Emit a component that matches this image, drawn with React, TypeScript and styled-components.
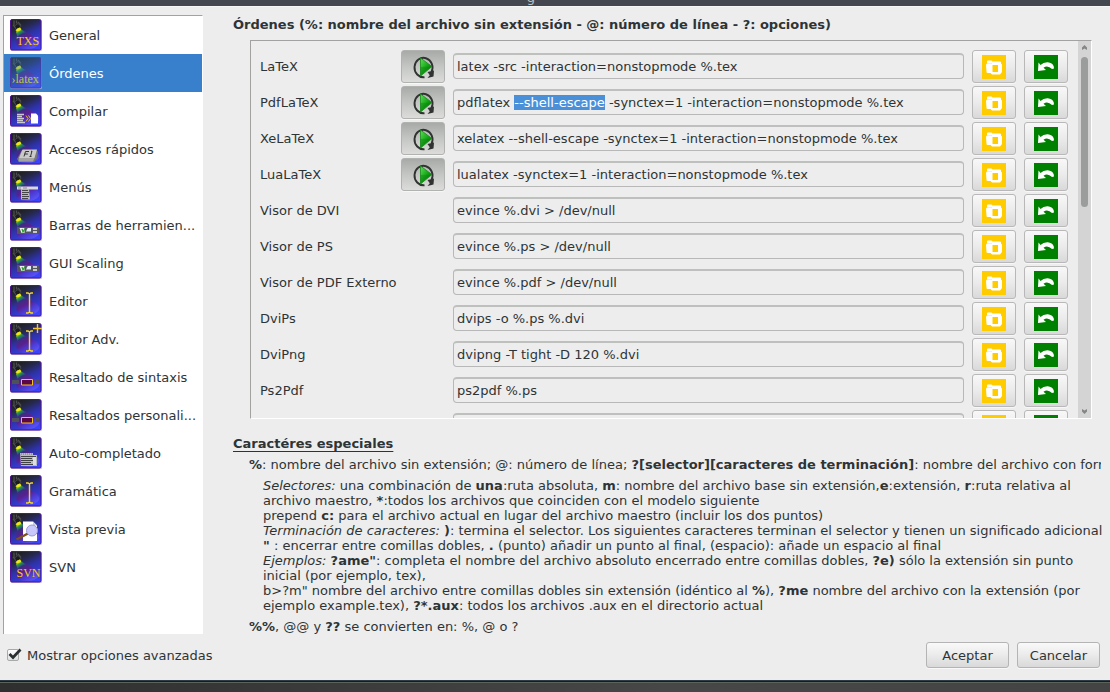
import React, { useEffect, useRef } from "react";
import styled, { createGlobalStyle } from "styled-components";

const GlobalStyle = createGlobalStyle`
  * { box-sizing: border-box; }
  body {
    margin: 0;
    background: #ededed;
    color: #2e3436;
    font-family: "DejaVu Sans", sans-serif;
    font-size: 13px;
    line-height: 15px;
  }
  button, input { font: inherit; color: inherit; margin: 0; }
`;

const Window = styled.div`
  display: flex;
  flex-direction: column;
  min-height: 100vh;
`;

const TitleBar = styled.header`
  display: flex;
  justify-content: center;
  align-items: flex-end;
  height: 6px;
  padding-right: 48px;
  padding-bottom: 1px;
  overflow: hidden;
  background: #444750;
  color: #c0c2c6;
`;

const Content = styled.div`
  flex: 1;
  display: flex;
  padding: 8px 6px 0 3px;
  border-top: 1px solid #f6f6f6;
`;

const Sidebar = styled.nav`
  flex: 0 0 200px;
  background: #fff;
  border: 1px solid #fff;
  border-top-color: #a2a2a0;
  border-left-color: #a2a2a0;
  border-bottom: 0;
`;

const SideLink = styled.a<{ $active?: boolean }>`
  display: flex;
  align-items: center;
  gap: 7px;
  height: 38px;
  padding-left: 6px;
  color: ${(p) => (p.$active ? "#fff" : "#2e3436")};
  background: ${(p) => (p.$active ? "#3880cc" : "transparent")};
  text-decoration: none;
  white-space: nowrap;
`;

const Tile = styled.svg<{ $dim?: boolean }>`
  flex: none;
  opacity: ${(p) => (p.$dim ? 0.65 : 1)};
`;

const Page = styled.main`
  flex: 1;
  min-width: 0;
  padding-left: 30px;
`;

const Heading = styled.h1`
  margin: 2px 0 7px;
  font-size: 13px;
  line-height: 16px;
  font-weight: bold;
`;

const Frame = styled.section`
  display: flex;
  height: 379px;
  margin: 0 12px 0 17px;
  border: 1px solid #fff;
  border-top-color: #a2a2a0;
  border-left-color: #a2a2a0;
  overflow: hidden;
`;

const Rows = styled.div`
  flex: 1;
  min-width: 0;
  padding: 9px 10px 0 9px;
`;

const Row = styled.div`
  display: grid;
  grid-template-columns: 133px 44px 1fr 44px 44px;
  column-gap: 8px;
  align-items: center;
  height: 36px;
  padding-bottom: 3px;
  white-space: nowrap;
`;

const CommandInput = styled.input`
  && { margin-bottom: 1px; }
  grid-column: 3;
  width: 100%;
  height: 26px;
  padding: 0 3px;
  border: 1px solid #b8b8b8;
  border-top: 2px solid #bec0be;
  border-radius: 4px;
  background: #ededed;
  outline: none;
  &::selection { background: #4a90d9; color: #fff; }
`;

const ToolButton = styled.button<{ $pressed?: boolean }>`
  display: flex;
  align-items: center;
  justify-content: center;
  height: 33px;
  padding: 1px 0 0;
  border: 1px solid ${(p) => (p.$pressed ? "#b0b3b0" : "#b8b8b8")};
  border-radius: 3px;
  background: ${(p) =>
    p.$pressed
      ? "linear-gradient(#a7aaa6, #c4c6c3 50%, #dcdddb)"
      : "linear-gradient(#f8f8f8, #ebebeb 50%, #d9d9d9)"};
  box-shadow: 0 1px 0 #f7f7f7;
`;

const ScrollTrack = styled.div`
  display: flex;
  flex-direction: column;
  align-items: center;
  width: 13px;
  padding: 4px 0;
  background: #d4d4d4;
`;

const ScrollThumb = styled.div`
  width: 7px;
  height: 150px;
  margin-top: 7px;
  margin-bottom: auto;
  border-radius: 4px;
  background: #9b9d9d;
`;

const Help = styled.section`
  margin-top: 17px;
`;

const HelpTitle = styled.h2`
  margin: 0;
  font-size: 13px;
  line-height: 16px;
  text-decoration: underline;
  text-underline-offset: 3px;
`;

const HelpLine = styled.p`
  margin: 5px 3px 6px 16px;
  overflow: hidden;
  white-space: nowrap;
  &:last-child { margin-bottom: 0; }
`;

const HelpBlock = styled.p`
  margin: 0 0 6px 30px;
`;

const Footer = styled.footer`
  display: flex;
  align-items: center;
  justify-content: space-between;
  height: 46px;
  padding: 0 10px 4px 7px;
`;

const CheckLabel = styled.label`
  display: flex;
  align-items: center;
  gap: 5px;
`;

const CheckHolder = styled.span`
  position: relative;
  display: flex;
  width: 15px;
  height: 14px;
`;

const Check = styled.input`
  appearance: none;
  width: 12px;
  height: 12px;
  margin-top: 1px;
  border: 1px solid #a8aaa8;
  border-radius: 2px;
  background: linear-gradient(#fff, #e0e0e0);
  & + svg { display: none; }
  &:checked + svg { display: block; }
`;

const CheckMark = styled.svg`
  position: absolute;
  left: 0;
  top: 0;
  pointer-events: none;
`;

const Actions = styled.div`
  display: flex;
  gap: 8px;
`;

const DialogButton = styled.button`
  width: 83px;
  height: 26px;
  padding: 0;
  border: 1px solid #b4b4b4;
  border-radius: 3px;
  background: linear-gradient(#f9f9f9, #ebebeb 50%, #d9d9d9);
  box-shadow: 0 1px 0 #f8f8f8;
`;

const Desktop = styled.div`
  height: 12px;
  border-top: 1px solid #2e3a44;
  background: linear-gradient(#171c20 0 1px, #5b645b 1px 2px, transparent 2px),
    linear-gradient(90deg, #2f2f2f, #474747 60%, #444);
`;

const PaintDefs = styled.svg`
  display: block;
`;

type Kind =
  | "txs" | "latex" | "build" | "key" | "menu" | "toolbar" | "cursor"
  | "cursorPlus" | "syntax" | "complete" | "preview" | "svn";

const serif = '"Liberation Serif", serif';

const Cursor = () => (
  <path
    d="M16 8h2l1.500 1 1.500-1h2M19.500 9v18.500M16 28h2l1.500-1 1.500 1h2"
    fill="none" stroke="#f8d81c" strokeWidth="1.400"
  />
);

const Emblem = ({ kind }: { kind: Kind }) => {
  switch (kind) {
    case "txs":
      return <text x="6.500" y="26" fontFamily={serif} fontSize="12" fill="#f8c820">TXS</text>;
    case "svn":
      return <text x="6.500" y="26" fontFamily={serif} fontSize="12" fill="#f8c820">SVN</text>;
    case "latex":
      return <text x="1.500" y="26" fontFamily={serif} fontSize="12" fill="#ffe800">›latex</text>;
    case "build":
      return (
        <g>
          <path d="M7 19.500h7M7 21.500h5M7 23.500h7M7 25.500h6M7 27.500h8" stroke="#c9c9cf" strokeWidth="1.300" />
          <path d="M16 20.500l2 3-2 3M18.500 20.500l2 3-2 3" fill="none" stroke="#e3b92c" />
          <path d="M21 18.500h5l2 2v8h-7z" fill="#fff" />
        </g>
      );
    case "key":
      return (
        <g>
          <path d="M12 17h14.500l1.500 2-1 6-3 4H9l-2-3z" fill="#77777a" />
          <path d="M12.500 16.500H27L24.500 25H9z" fill="#c9c9c9" />
          <path d="M9 25h15.500L23 28.500H8.500z" fill="#a3a3a3" />
          <path d="M14 23.500l1.500-5h3.500M14.800 21h3M21 18.500l1-.500-1.500 5.500M19.500 23.500h2" fill="none" stroke="#333" />
        </g>
      );
    case "menu":
      return (
        <g>
          <path d="M7 15.500h21v3H7z" fill="#d9d9de" />
          <path d="M11 18h8l1 10.500h-9z" fill="#b9b9b9" />
          <path d="M12 19.500h6M12 21.500h7M12 23.500h6M12 25.500h7M12 27.500h6" stroke="#45454a" />
          <path d="M8 17h3M13 17h4" stroke="#888" />
        </g>
      );
    case "toolbar":
      return (
        <g>
          <path d="M7 18h22v7H7z" fill="#54565f" />
          <path d="M9.500 19h5v5h-3z" fill="#f4f4f4" />
          <path d="M12 20l1 3 2-3.500" fill="none" stroke="#2ea032" strokeWidth="1.300" />
          <path d="M17 20l1-1h3v4h-5z" fill="#e4effd" />
          <path d="M16 22.500h5" stroke="#70a8e0" />
          <path d="M23 19h4v2h-4zM23 22h4v2h-4z" fill="#c8c8c8" />
        </g>
      );
    case "cursor":
      return <Cursor />;
    case "cursorPlus":
      return (
        <g>
          <Cursor />
          <path d="M23 5.500h9M27.500 1v9" stroke="#f3c52e" strokeWidth="1.400" />
        </g>
      );
    case "syntax":
      return (
        <g>
          <path d="M2 19h7v4H2zM25 19h4v4h-4z" fill="#505058" />
          <path d="M11.500 18.500h11v5.500h-11z" fill="#5b0648" stroke="#f1c321" />
        </g>
      );
    case "complete":
      return (
        <g>
          <path d="M10 16h13v2h4v11H11z" fill="#b7b9c0" />
          <path d="M11 17h11" stroke="#70758c" strokeDasharray="1 1" />
          <path d="M11 19.500h15M11 21.500h11M11 23.500h13M11 25.500h10M11 27.500h12" stroke="#404246" strokeWidth="1.100" />
          <path d="M23 20h3v8h-3z" fill="#dedede" />
        </g>
      );
    default:
      return (
        <g>
          <path d="M13 8.500h10l4 4V28H13z" fill="#fff" />
          <path d="M23 8.500v4h4" fill="#ccc" />
          <path d="M6.500 26.500L18 20.500" stroke="#7a5316" strokeWidth="2.500" />
          <circle cx="22" cy="17.500" r="5.500" fill="#c9c8fa" stroke="#9c9ad8" />
        </g>
      );
  }
};

const TileIcon = ({ kind, dim }: { kind: Kind; dim?: boolean }) => (
  <Tile $dim={dim} width="32" height="32" viewBox="0 0 32 32" aria-hidden="true">
    <rect x="0.500" y="1" width="31.500" height="31" rx="1.500" fill="#c9bfd6" />
    <rect x="0.500" y="0.500" width="30.500" height="30.500" rx="1.500" fill="url(#night)" stroke="#4f1496" />
    <path d="M6.500 12L12 10.500L27 19Q30 22 29 25Q26 30 17 30Q8 30 6.500 25Z" fill="url(#beam)" />
    <path d="M6 12.500L11 10.500L16 13.500Q11 14 7.500 18Z" fill="url(#rainbow)" />
    <path d="M4 1.500v6M6.500 1.500v3M8 3l3 3.500M3 6l3 3" stroke="#4b4d50" strokeWidth="1.300" />
    <path d="M4.500 7L8 4.500L11 7.500L6.500 11Z" fill="#1b1c1e" stroke="#5a5c5e" strokeWidth="0.600" />
    <path d="M5.500 11.500Q6.500 9 10 8.500Q12 10 11 11Q8.500 13 5.500 11.500Z" fill="#ece81e" />
    <Emblem kind={kind} />
  </Tile>
);

const IconPaints = () => (
  <PaintDefs width="0" height="0" aria-hidden="true">
    <defs>
      <linearGradient id="night" x1="0.300" y1="0" x2="0.800" y2="1">
        <stop offset="0.050" stopColor="#202124" />
        <stop offset="0.250" stopColor="#26284c" />
        <stop offset="0.500" stopColor="#2e32a8" />
        <stop offset="1" stopColor="#3a44ff" />
      </linearGradient>
      <linearGradient id="beam" x1="0" y1="0" x2="0.700" y2="1">
        <stop offset="0" stopColor="#1f4a70" />
        <stop offset="0.200" stopColor="#32307c" />
        <stop offset="0.500" stopColor="#5a2090" />
        <stop offset="0.750" stopColor="#4c3cd8" />
        <stop offset="1" stopColor="#5a54f4" />
      </linearGradient>
      <linearGradient id="rainbow" x1="0" y1="0" x2="0.800" y2="0.900">
        <stop offset="0.150" stopColor="#c8d820" />
        <stop offset="0.400" stopColor="#2a9a40" />
        <stop offset="0.750" stopColor="#1d5a8c" stopOpacity="0.500" />
      </linearGradient>
      <linearGradient id="play" x1="0" y1="0" x2="1" y2="1">
        <stop offset="0" stopColor="#5ee05a" />
        <stop offset="0.500" stopColor="#16a818" />
        <stop offset="1" stopColor="#045c08" />
      </linearGradient>
    </defs>
  </PaintDefs>
);

const RunIcon = () => (
  <svg width="24" height="24" viewBox="0 0 24 24" aria-hidden="true">
    <path d="M13.500 22.200A9 9.700 0 1 1 20.500 17" fill="none" stroke="#303331" strokeWidth="1.900" />
    <path d="M16.500 17L23 15.500L22.500 21.500L16.500 23L18.800 20.200Z" fill="#303331" />
    <path d="M9.500 3L21 11.500L9.500 21Z" fill="url(#play)" stroke="#168a18" strokeWidth="0.800" />
    <path d="M9.500 12L20 11.500L9.500 20.500Z" fill="#087d0b" opacity="0.400" />
  </svg>
);

const FolderIcon = () => (
  <svg width="24" height="24" viewBox="0 0 24 24" aria-hidden="true">
    <path d="M0 0h24v24H0z" fill="#ffcc00" />
    <path d="M5 6.500Q5 5.500 6 5.500H9.500L10.500 6.500H18Q19 6.500 19 7.500V8.500Q20 9 20 10V17L18 19.500H10L8.500 18H5.500Q4.500 18 4.500 17L4 10Q4 9 5 8.500Z" fill="#fff" />
    <path d="M10.500 10h5.500v7h-5.500z" fill="#ffcc00" />
    <path d="M5 8.500h5" stroke="#ffe680" strokeWidth="0.600" />
  </svg>
);

const RevertIcon = () => (
  <svg width="24" height="24" viewBox="0 0 24 24" aria-hidden="true">
    <path d="M0 0h24v24H0z" fill="#008000" />
    <path d="M4.500 7.500L4 16L12 15L9.500 12.800Q13.500 9.500 18 14L20 13.500Q20 8.500 15 7.500Q10 6.800 6.500 10Z" fill="#fff" />
  </svg>
);

const Arrow = ({ down }: { down?: boolean }) => (
  <svg width="7" height="5" viewBox="0 0 7 5" aria-hidden="true">
    <path d={down ? "M1 0L3.500 1.500L6 0V2.500L3.500 5L1 2.500Z" : "M1 5L3.500 3.500L6 5V2.500L3.500 0L1 2.500Z"} fill="#858787" />
  </svg>
);

const sections: [Kind, string][] = [
  ["txs", "General"],
  ["latex", "Órdenes"],
  ["build", "Compilar"],
  ["key", "Accesos rápidos"],
  ["menu", "Menús"],
  ["toolbar", "Barras de herramien..."],
  ["toolbar", "GUI Scaling"],
  ["cursor", "Editor"],
  ["cursorPlus", "Editor Adv."],
  ["syntax", "Resaltado de sintaxis"],
  ["syntax", "Resaltados personali..."],
  ["complete", "Auto-completado"],
  ["cursor", "Gramática"],
  ["preview", "Vista previa"],
  ["svn", "SVN"],
];

const commands: { label: string; value: string; run?: boolean }[] = [
  { label: "LaTeX", value: "latex -src -interaction=nonstopmode %.tex", run: true },
  { label: "PdfLaTeX", value: "pdflatex --shell-escape -synctex=1 -interaction=nonstopmode %.tex", run: true },
  { label: "XeLaTeX", value: "xelatex --shell-escape -synctex=1 -interaction=nonstopmode %.tex", run: true },
  { label: "LuaLaTeX", value: "lualatex -synctex=1 -interaction=nonstopmode %.tex", run: true },
  { label: "Visor de DVI", value: "evince %.dvi > /dev/null" },
  { label: "Visor de PS", value: "evince %.ps > /dev/null" },
  { label: "Visor de PDF Externo", value: "evince %.pdf > /dev/null" },
  { label: "DviPs", value: "dvips -o %.ps %.dvi" },
  { label: "DviPng", value: "dvipng -T tight -D 120 %.dvi" },
  { label: "Ps2Pdf", value: "ps2pdf %.ps" },
  { label: "", value: "" },
];

export default function App() {
  const editing = useRef<HTMLInputElement>(null);

  useEffect(() => {
    const field = editing.current;
    if (!field) return;
    const option = "--shell-escape";
    const start = field.value.indexOf(option);
    field.focus({ preventScroll: true });
    field.setSelectionRange(start, start + option.length);
  }, []);

  return (
    <Window>
      <GlobalStyle />
      <IconPaints />
      <TitleBar>g</TitleBar>
      <Content>
        <Sidebar>
          {sections.map(([kind, name]) => (
            <SideLink key={name} href="#" $active={kind === "latex"}>
              <TileIcon kind={kind} dim={kind === "latex"} />
              {name}
            </SideLink>
          ))}
        </Sidebar>
        <Page>
          <Heading>Órdenes (%: nombre del archivo sin extensión - @: número de línea - ?: opciones)</Heading>
          <Frame>
            <Rows>
              {commands.map((c, i) => (
                <Row key={i}>
                  <label htmlFor={`command-${i}`}>{c.label}</label>
                  {c.run && (
                    <ToolButton type="button" $pressed aria-label="Ejecutar">
                      <RunIcon />
                    </ToolButton>
                  )}
                  <CommandInput
                    id={`command-${i}`}
                    ref={c.label === "PdfLaTeX" ? editing : undefined}
                    defaultValue={c.value}
                    spellCheck={false}
                  />
                  <ToolButton type="button" aria-label="Examinar"><FolderIcon /></ToolButton>
                  <ToolButton type="button" aria-label="Restaurar"><RevertIcon /></ToolButton>
                </Row>
              ))}
            </Rows>
            <ScrollTrack>
              <Arrow />
              <ScrollThumb />
              <Arrow down />
            </ScrollTrack>
          </Frame>
          <Help>
            <HelpTitle>Caractéres especiales</HelpTitle>
            <HelpLine>
              <b>%</b>: nombre del archivo sin extensión; @: número de línea; <b>?[selector][caracteres de terminación]</b>: nombre del archivo con forma
            </HelpLine>
            <HelpBlock>
              <i>Selectores:</i> una combinación de <b>una</b>:ruta absoluta, <b>m</b>: nombre del archivo base sin extensión,<b>e</b>:extensión, <b>r</b>:ruta relativa al<br />
              archivo maestro, <b>*</b>:todos los archivos que coinciden con el modelo siguiente<br />
              prepend <b>c:</b> para el archivo actual en lugar del archivo maestro (incluir los dos puntos)<br />
              <i>Terminación de caracteres:</i> <b>)</b>: termina el selector. Los siguientes caracteres terminan el selector y tienen un significado adicional<br />
              <b>"</b> : encerrar entre comillas dobles, <b>.</b> (punto) añadir un punto al final, (espacio): añade un espacio al final<br />
              <i>Ejemplos:</i> <b>?ame"</b>: completa el nombre del archivo absoluto encerrado entre comillas dobles, <b>?e)</b> sólo la extensión sin punto inicial
              (por ejemplo, tex),<br />
              b&gt;?m" nombre del archivo entre comillas dobles sin extensión (idéntico al <b>%</b>), <b>?me</b> nombre del archivo con la extensión (por<br />
              ejemplo example.tex), <b>?*.aux</b>: todos los archivos .aux en el directorio actual
            </HelpBlock>
            <HelpLine>
              <b>%%</b>, @@ y <b>??</b> se convierten en: %, @ o ?
            </HelpLine>
          </Help>
        </Page>
      </Content>
      <Footer>
        <CheckLabel>
          <CheckHolder>
            <Check type="checkbox" defaultChecked />
            <CheckMark width="15" height="13" viewBox="0 0 15 13" aria-hidden="true">
              <path d="M2.500 6L6 9.500L13.500 1.500" fill="none" stroke="#2a3032" strokeWidth="2.700" />
            </CheckMark>
          </CheckHolder>
          Mostrar opciones avanzadas
        </CheckLabel>
        <Actions>
          <DialogButton type="button">Aceptar</DialogButton>
          <DialogButton type="button">Cancelar</DialogButton>
        </Actions>
      </Footer>
      <Desktop />
    </Window>
  );
}
